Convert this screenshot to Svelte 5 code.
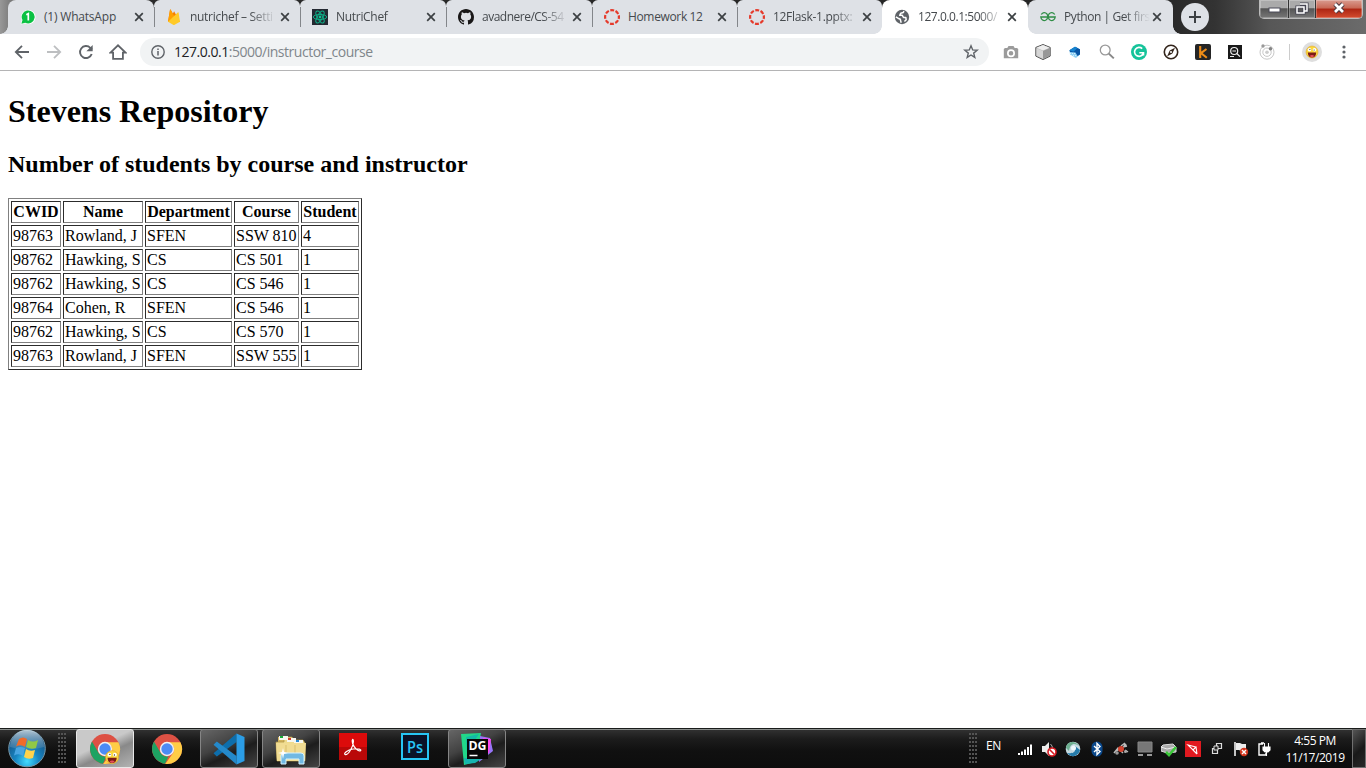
<script>
  const tabs = [
    { icon: 'whatsapp', title: '(1) WhatsApp', spacing: -0.2, width: 146 },
    { icon: 'firebase', title: 'nutrichef – Setti', spacing: -0.3, width: 146 },
    { icon: 'react', title: 'NutriChef', spacing: -0.3, width: 146 },
    { icon: 'github', title: 'avadnere/CS-54', spacing: -0.5, width: 146 },
    { icon: 'canvas', title: 'Homework 12', spacing: -0.35, width: 145 },
    { icon: 'canvas', title: '12Flask-1.pptx:', spacing: -0.3, width: 145 },
    { icon: 'globe', title: '127.0.0.1:5000/', spacing: -0.45, width: 146, active: true },
    { icon: 'gfg', title: 'Python | Get firs', spacing: -0.42, width: 145 }
  ];
  const extensions = ['camera', 'cube', 'blue', 'lens', 'grammarly', 'compass', 'kite', 'inspect', 'orbit'];
  const columns = ['CWID', 'Name', 'Department', 'Course', 'Student'];
  const rows = [
    ['98763', 'Rowland, J', 'SFEN', 'SSW 810', '4'],
    ['98762', 'Hawking, S', 'CS', 'CS 501', '1'],
    ['98762', 'Hawking, S', 'CS', 'CS 546', '1'],
    ['98764', 'Cohen, R', 'SFEN', 'CS 546', '1'],
    ['98762', 'Hawking, S', 'CS', 'CS 570', '1'],
    ['98763', 'Rowland, J', 'SFEN', 'SSW 555', '1']
  ];
  const apps = [
    { icon: 'chromeUser', state: 'current' },
    { icon: 'chrome', state: '' },
    { icon: 'vscode', state: 'open' },
    { icon: 'explorer', state: 'open' },
    { icon: 'acrobat', state: '' },
    { icon: 'photoshop', state: '' },
    { icon: 'datagrip', state: 'open' }
  ];
  const tray = ['signal', 'speaker', 'swirl', 'bluetooth', 'bug', 'monitor', 'drive', 'red', 'windows', 'flag', 'power'];
</script>

{#snippet face()}
  <circle cx="8" cy="8" r="6" fill="#fbd83c" stroke="#e3a42d" stroke-width=".6" />
  <circle cx="5.5" cy="5.7" r="1.8" fill="#fff" /><circle cx="10.5" cy="5.7" r="1.8" fill="#fff" />
  <circle cx="5.9" cy="5.5" r=".6" fill="#432" /><circle cx="10.1" cy="6" r=".6" fill="#432" />
  <path d="M3.8 8.5h8.4c0 3-1.6 5-4.2 5s-4.2-2-4.2-5z" fill="#7c1b15" />
  <path d="M5.7 12c1.3-1.2 3.3-1.2 4.6 0-1.1 1.5-3.5 1.5-4.6 0z" fill="#e8505b" />
{/snippet}

{#snippet chromeLogo()}
  <circle cx="16" cy="16" r="15" fill="#dd5144" />
  <path d="M3 8.5 9.5 19.8A7.5 7.5 0 0 0 17.5 23.3L14 30.8A15 15 0 0 1 3 8.5z" fill="#1da362" />
  <path d="M16 9.2h13.4A15 15 0 0 1 14.2 30.9l8.1-11.2A7.2 7.2 0 0 0 16 9.2z" fill="#ffcd46" />
  <circle cx="16" cy="16" r="7.2" fill="#f1f1f1" /><circle cx="16" cy="16" r="5.7" fill="#4c8bf5" />
{/snippet}

{#snippet favicon(name)}
  <svg width="16" height="16" viewBox="0 0 16 16">
    {#if name === 'whatsapp'}
      <path d="M.6 15.5 1.8 11A7.2 7.2 0 1 1 5 14.4z" fill="#fff" />
      <path d="M1.4 14.7l1.1-3.6A6.5 6.5 0 1 1 5.2 13.7z" fill="#0bc143" />
      <path d="M6.3 5.8 8.3 4.7V11.4" stroke="#fff" stroke-width="1.7" fill="none" />
    {:else if name === 'firebase'}
      <path d="M2 12.7 4 .8c.1-.5.5-.5.7-.1L6.8 4.6l1-1.7c.2-.4.5-.4.7 0L14 13z" fill="#f57c00" />
      <path d="M2 12.7 4 .8c.1-.5.5-.5.7-.1l4 7.4z" fill="#ffa000" />
      <path d="M2 12.7 11.8 3.4c.3-.3.7-.2.8.3L14 12.7 8.6 15.7c-.5.3-1 .3-1.5 0z" fill="#ffca28" />
    {:else if name === 'react'}
      <rect width="16" height="16" fill="#242932" />
      <g fill="none" stroke="#0fae87" stroke-width="1">
        <ellipse cx="8" cy="8" rx="6.7" ry="2.6" /><ellipse cx="8" cy="8" rx="6.7" ry="2.6" transform="rotate(60 8 8)" /><ellipse cx="8" cy="8" rx="6.7" ry="2.6" transform="rotate(120 8 8)" />
      </g><circle cx="8" cy="8" r="1.4" fill="#12c495" />
    {:else if name === 'github'}
      <path fill="#191717" d="M8 0C3.58 0 0 3.58 0 8c0 3.54 2.29 6.53 5.47 7.59.4.07.55-.17.55-.38 0-.19-.01-.82-.01-1.49-2.01.37-2.53-.49-2.69-.94-.09-.23-.48-.94-.82-1.13-.28-.15-.68-.52-.01-.53.63-.01 1.08.58 1.23.82.72 1.21 1.87.87 2.33.66.07-.52.28-.87.51-1.07-1.78-.2-3.64-.89-3.64-3.95 0-.87.31-1.59.82-2.15-.08-.2-.36-1.02.08-2.12 0 0 .67-.21 2.2.82a7.6 7.6 0 0 1 4 0c1.53-1.04 2.2-.82 2.2-.82.44 1.1.16 1.92.08 2.12.51.56.82 1.27.82 2.15 0 3.07-1.87 3.75-3.65 3.95.29.25.54.73.54 1.48 0 1.07-.01 1.93-.01 2.2 0 .21.15.46.55.38A8 8 0 0 0 16 8c0-4.42-3.58-8-8-8z" />
    {:else if name === 'canvas'}
      <circle cx="8" cy="8" r="6.9" fill="none" stroke="#e53a2b" stroke-width="2.2" stroke-dasharray="3.9 1.519" stroke-dashoffset="1.95" />
    {:else if name === 'globe'}
      <circle cx="8" cy="8" r="7.2" fill="#5f6368" />
      <path d="M10 2.2 9.2 3.6 6.8 4.2 5.7 6.3H8.300L9.500 8.500H11.800L12.200 10.700 10.400 12.600" fill="none" stroke="#fff" stroke-width="1.5" stroke-linejoin="round" />
      <path d="M1.800 7.800 4 9.200 6.300 10.200 6.600 11.600 7.200 13.800" fill="none" stroke="#fff" stroke-width="1.500" stroke-linejoin="round" />
    {:else if name === 'gfg'}
      <path d="M1.3 5.5A3.5 4 0 1 1 .8 8H15.2A3.5 4 0 1 1 14.7 5.5" fill="none" stroke="#2f8d46" stroke-width="1.3" />
    {/if}
  </svg>
{/snippet}

{#snippet extIcon(name)}
  <svg width="16" height="16" viewBox="0 0 16 16">
    {#if name === 'camera'}
      <path fill-rule="evenodd" fill="#9b9b9b" d="M5.5 2h5l1.2 2H14l1.2 1v9.3H.8V5L2 4h2.3zM8 5.2a4 4 0 1 0 0 8 4 4 0 0 0 0-8zm0 1.7a2.3 2.3 0 1 1 0 4.6 2.3 2.3 0 0 1 0-4.6z" />
    {:else if name === 'cube'}
      <path d="M8 .5 15.2 3.4v8.7L8 15.6.8 12.1V3.4z" fill="#bbb" stroke="#555" />
      <path d="M8 1 14.5 3.7 8 6.5 1.5 3.7z" fill="#eee" /><path d="M8 7l6.5-2.7v7.4L8 14.8z" fill="#989898" /><path d="M1.5 4.3 8 7v7.8l-6.5-3z" fill="#d5d5d5" />
    {:else if name === 'blue'}
      <path d="M2.5 6.3 8 2.8l5 2.4v5.3l-4 3.5-6-3.5z" fill="#8fd0f4" /><path d="M2.5 6.3 8 2.8l5 2.4v5.3l-2.5 1.5-2-3.5-5.5-.5z" fill="#0955a5" /><path d="M2.5 6.3 8 2.8l2.5 1.3-4 3.6z" fill="#1685d0" />
      <path d="M3 9.5h5M4 11.5h5M7 13.5h2" fill="none" stroke="#e4f5fd" stroke-width=".8" stroke-dasharray="1 1" />
    {:else if name === 'lens'}
      <circle cx="6.2" cy="6" r="4.9" fill="none" stroke="#999" stroke-width="1.3" /><path d="m9.8 9.6 5 4.8" stroke="#888" stroke-width="2" />
    {:else if name === 'grammarly'}
      <circle cx="8" cy="8" r="8" fill="#15c39a" /><path d="M11.2 4.6A4.5 4.5 0 1 0 12.3 9.4M8.3 8.7h4.2v2.8" fill="none" stroke="#fff" stroke-width="1.6" />
    {:else if name === 'compass'}
      <circle cx="8" cy="8" r="6.7" fill="#fff" stroke="#33251b" stroke-width="1.6" /><path d="m12 3.8-2.6 5.6-5.4 3 2.7-5.8z" fill="#33251b" /><circle cx="8" cy="8" r="1" fill="#fff" />
    {:else if name === 'kite'}
      <rect width="16" height="16" rx="2" fill="#252525" /><path d="M5.2 2v12M11.5 5 6 9.1l5.8 4.6" fill="none" stroke="#ef8d17" stroke-width="2.1" />
    {:else if name === 'inspect'}
      <rect x="1" y="1" width="14" height="14" fill="#191919" /><circle cx="7.2" cy="7" r="3.5" fill="none" stroke="#eee" stroke-width="1.2" /><path d="m9.8 9.5 3.2 3.2M5.4 7h3.6M3 12.5h4" stroke="#eee" stroke-width="1.2" />
    {:else if name === 'orbit'}
      <g fill="none" stroke="#c7c7c7"><circle cx="8" cy="8.2" r="7" /><circle cx="8" cy="8.2" r="4.2" /></g><circle cx="8" cy="8.2" r="1.8" fill="#ccc" /><circle cx="4" cy="2" r="1.7" fill="#999" /><circle cx="11.5" cy="4.8" r="1.8" fill="#858585" />
    {/if}
  </svg>
{/snippet}

{#snippet appIcon(name)}
  <svg width="32" height="32" viewBox="0 0 32 32">
    {#if name === 'chrome'}
      {@render chromeLogo()}
    {:else if name === 'chromeUser'}
      {@render chromeLogo()}
      <g transform="translate(14.5 15.5) scale(1.08)">{@render face()}</g>
    {:else if name === 'vscode'}
      <path d="M23.5.5V9L3.8 23.5.5 20.3z" fill="#0d6eac" />
      <path d="M23.5 31.5V23L3.8 8.5.5 11.7z" fill="#2489ca" />
      <path d="M23.5.5 31.5 4v24l-8 3.5z" fill="#2b9de6" />
    {:else if name === 'explorer'}
      <path d="M3 4h9l1 3h9l1 2h6v19H3z" fill="#d5b55e" /><path d="M1 9h8V4h8l2 3h9l2 3v18H2z" fill="#efdb8d" stroke="#ad9346" stroke-width=".7" />
      <path d="M4 3h9v4H4zM12 5h9v4h-9zM19 7h9v4h-9z" fill="#f7f7f0" /><path d="M5 3h3v2H5z" fill="#18ab38" /><path d="M13 5h3v2h-3z" fill="#d53b2c" /><path d="M21 7h3v2h-3z" fill="#2b8cd6" />
      <path d="M1 10h30l-1 18H2z" fill="#f1dc92" /><path d="M11 12v9M20 12v8" stroke="#d9bf6e" />
      <path d="M6 31v-8q0-3 3-3h17q3 0 3 3v8h-5v-5H11v5z" fill="#71b9e3" stroke="#d5f3ff" /><path d="m8 15 1 4 4 1-4 1-1 5-1-5-4-1 4-1z" fill="#fff" />
    {:else if name === 'acrobat'}
      <rect x="2" y="0" width="28" height="27" fill="#b90808" /><rect x="2" y="0" width="28" height="14" fill="#dc0b0b" />
      <path d="M8 21.5c-1.5-1 2-4.5 8-5.5 5-.8 9 .5 7.5 1.7-2 1.3-6.5-3-7.9-7.2-1.3-4.5.9-5.5.8-1.7-.2 5-5.4 14-8.4 12.7z" fill="none" stroke="#fff" stroke-width="1.2" />
    {:else if name === 'photoshop'}
      <rect x="3" y="1" width="26" height="25" fill="#0a1227" stroke="#27c5f5" stroke-width="2" />
      <text x="16" y="19.5" text-anchor="middle" font-family="Open Sans" font-size="16" font-weight="600" textLength="16" lengthAdjust="spacingAndGlyphs" fill="#27c5f5">Ps</text>
    {:else if name === 'datagrip'}
      <path d="M0 1 20 0 15 29 3 32z" fill="#21d789" /><path d="m5 4 13-3-12 18z" fill="#14b8a6" /><path d="M19 3 29 5l3 13-14 11z" fill="#9775f8" /><path d="m22 5 8 1-2 14h-6z" fill="#ff45ed" /><path d="M3 25h19l-8 5-10 1z" fill="#16b5b0" />
      <rect x="6" y="6" width="21" height="20" fill="#080808" /><text x="7.5" y="17" font-family="Open Sans" font-size="12" font-weight="700" textLength="18" lengthAdjust="spacingAndGlyphs" fill="#fff">DG</text><path d="M8.5 22.5h8" stroke="#fff" stroke-width="1.5" />
    {/if}
  </svg>
{/snippet}

{#snippet trayIcon(name)}
  <svg width="16" height="16" viewBox="0 0 16 16">
    {#if name === 'signal'}
      <path d="M1 12h2v2H1zM4 10.5h2V14H4zM7 8.5h2V14H7zM10 6h2v8h-2zM13 3.5h2V14h-2z" fill="#fff" />
    {:else if name === 'speaker'}
      <path d="M1 5h3l4-4v14l-4-4H1z" fill="#eee" /><path d="M9.5 3q2 2 2 4" stroke="#aaa" fill="none" /><circle cx="11" cy="11" r="4" fill="#fff" stroke="#d71920" stroke-width="1.6" /><path d="m8.5 8.5 5 5" stroke="#d71920" stroke-width="1.6" />
    {:else if name === 'swirl'}
      <circle cx="8" cy="8" r="7.3" fill="#c6dae2" /><path d="M1 7C2 0 10-1 14 5 9 1 5 3 4 10z" fill="#6daf90" /><path d="M15 9c-2 7-9 8-13 3 7 1 9-1 8-7z" fill="#257baa" /><circle cx="8.5" cy="7" r="2.5" fill="#eef8fc" />
    {:else if name === 'bluetooth'}
      <rect x="2.5" y=".5" width="11" height="15" rx="5.5" fill="#0a488b" /><path d="m5 5 6 5.5L8 13.5v-11l3 3L5 11" fill="none" stroke="#fff" stroke-width="1.4" />
    {:else if name === 'bug'}
      <path d="m1 12 4-5 5 5M8 5l4-3M12 9l3 2M3 10l5-3M10 6l4-1" fill="none" stroke="#bbb" stroke-width="1.5" /><circle cx="8" cy="8" r="3" fill="#d34430" /><circle cx="12" cy="4" r="1.6" fill="#bbb" /><circle cx="4" cy="12" r="1.8" fill="#999" /><circle cx="12.5" cy="10.5" r="1.5" fill="#aaa" />
    {:else if name === 'monitor'}
      <path d="M1 1h14v10H1z" fill="#777" stroke="#888" /><path d="M1 13h5v2H1zM10 13h5v2h-5z" fill="#999" />
    {:else if name === 'drive'}
      <path d="m2 4 10-1 3 3v5l-9 1-6-2V6z" fill="#aaa" stroke="#ddd" /><path d="m0 6 6 2 9-2" stroke="#eee" fill="none" /><path d="m5 11 3 3 7-8" fill="none" stroke="#3bc639" stroke-width="2.6" />
    {:else if name === 'red'}
      <rect width="16" height="16" fill="#e1191f" /><path d="m3 4 8 2-3 3zM8 9l4 4M11 6l1 7" fill="none" stroke="#fff" stroke-width="1.1" />
    {:else if name === 'windows'}
      <path d="M7.5 2.5h5v5h-5zM3.500 7.500h5v5h-5z" fill="#222" stroke="#ddd" stroke-width="1.2" /><path d="M5 5h4v4H5z" fill="#222" stroke="#ddd" />
    {:else if name === 'flag'}
      <path d="M2 1v14" stroke="#fff" stroke-width="1.5" /><path d="M3 2h4l2 1h4v7H8L6 9H3z" fill="#eee" /><circle cx="11" cy="11" r="4.2" fill="#d4361e" /><path d="m9 9 4 4m0-4-4 4" stroke="#fff" stroke-width="1.4" />
    {:else if name === 'power'}
      <path d="M6 3H2v11h7v-2M4 2h3" fill="none" stroke="#fff" stroke-width="1.4" /><path d="M6 6h7v3l-2 2H8L6 9zM7.500 2v4M11.500 2v4M9.500 11v4" fill="#fff" stroke="#fff" stroke-width="1.1" />
    {/if}
  </svg>
{/snippet}

<div class="screen">
  <header class="titlebar">
    <nav class="tabs">
      {#each tabs as tab, i}
        <div class="tab" class:active={tab.active} class:first={i === 0} class:last={i === 7} class:divided={i > 0 && i < 6} style="width: {tab.width}px">
          {@render favicon(tab.icon)}
          <span class="tab-title" style="letter-spacing: {tab.spacing}px">{tab.title}</span>
          <svg class="tab-close" width="10" height="10" viewBox="0 0 10 10"><path d="m1.2 1.2 7.600 7.600m0-7.600L1.200 8.800" stroke="#3c4043" stroke-width="1.7" /></svg>
        </div>
      {/each}
    </nav>
    <div class="new-tab"><svg width="14" height="14" viewBox="0 0 14 14"><path d="M7 1v12M1 7h12" stroke="#3c4043" stroke-width="2" /></svg></div>
    <div class="window-buttons">
      <div class="minimize"><svg width="13" height="7"><rect x="1" y="1" width="11" height="4" fill="#fff" stroke="#4b4b58" /></svg></div>
      <div class="restore"><svg width="14" height="13" viewBox="0 0 14 13"><path d="M5 2h7v7H9M2 5h7v6H2z" fill="none" stroke="#454553" stroke-width="3.2" /><path d="M5 2h7v7H9M2 5h7v6H2z" fill="none" stroke="#fff" stroke-width="1.5" /></svg></div>
      <div class="close"><svg width="14" height="12" viewBox="0 0 14 12"><path d="m3 2 8 8m0-8-8 8" stroke="#4b3840" stroke-width="4.6" /><path d="m3 2 8 8m0-8-8 8" stroke="#fff" stroke-width="2.7" /></svg></div>
    </div>
  </header>

  <div class="toolbar">
    <div class="navigation">
      <svg width="16" height="16" viewBox="0 0 16 16"><path d="M15 8H2M8 1.8 1.8 8 8 14.2" fill="none" stroke="#5f6368" stroke-width="1.8" /></svg>
      <svg width="16" height="16" viewBox="0 0 16 16"><path d="M1 8h13M8 1.8 14.2 8 8 14.2" fill="none" stroke="#bdbfc1" stroke-width="1.8" /></svg>
      <svg width="16" height="16" viewBox="0 0 16 16"><path d="M13.7 10A6 6 0 1 1 12.3 3.8L14 5.5" fill="none" stroke="#5f6368" stroke-width="1.9" /><path d="M14.7 1v6.3H8.4z" fill="#5f6368" /></svg>
      <svg class="home" width="18" height="16" viewBox="0 0 18 16"><path d="M1.5 8.6 9 1.3l7.5 7.3h-2.6v6.3H4.1V8.6z" fill="none" stroke="#5f6368" stroke-width="1.8" /></svg>
    </div>
    <div class="address">
      <svg width="14" height="14" viewBox="0 0 14 14"><circle cx="7" cy="7" r="6.2" fill="none" stroke="#5f6368" stroke-width="1.4" /><path d="M7 6v4.5M7 3.4v1.5" stroke="#5f6368" stroke-width="1.5" /></svg>
      <div class="url"><span>127.0.0.1</span>:5000/instructor_course</div>
      <svg class="star" width="16" height="16" viewBox="0 0 16 16"><path d="m8 1.8 1.7 4.1 4.5.3-3.5 2.9 1.1 4.3L8 11l-3.8 2.4 1.1-4.3-3.5-2.9 4.5-.3z" fill="none" stroke="#5f6368" stroke-width="1.4" /></svg>
    </div>
    <div class="extensions">
      {#each extensions as ext}{@render extIcon(ext)}{/each}
    </div>
    <div class="rule"></div>
    <div class="avatar"><svg width="16" height="16" viewBox="0 0 16 16">{@render face()}</svg></div>
    <svg class="dots" width="4" height="16" viewBox="0 0 4 16"><circle cx="2" cy="3" r="1.6" /><circle cx="2" cy="8" r="1.6" /><circle cx="2" cy="13" r="1.6" /></svg>
  </div>

  <main>
    <h1>Stevens Repository</h1>
    <h2>Number of students by course and instructor</h2>
    <table>
      <colgroup><col class="c1" /><col class="c2" /><col class="c3" /><col class="c4" /><col class="c5" /></colgroup>
      <thead><tr>{#each columns as column}<th>{column}</th>{/each}</tr></thead>
      <tbody>
        {#each rows as row}<tr>{#each row as cell}<td>{cell}</td>{/each}</tr>{/each}
      </tbody>
    </table>
  </main>

  <footer class="taskbar">
    <svg class="orb" width="40" height="39" viewBox="0 0 40 39">
      <defs>
        <radialGradient id="orbFill" cx=".5" cy=".85" r=".8"><stop offset="0" stop-color="#45dcff" /><stop offset=".4" stop-color="#1786c3" /><stop offset="1" stop-color="#164776" /></radialGradient>
        <linearGradient id="orbGlow" x2="0" y2="1"><stop stop-color="#dceaf1" stop-opacity=".8" /><stop offset="1" stop-color="#789eb8" stop-opacity=".25" /></linearGradient>
      </defs>
      <circle cx="20" cy="19.5" r="18.3" fill="url(#orbFill)" stroke="#7797a7" />
      <path d="M3 18a17 17 0 0 1 34 0Q20 23 3 18z" fill="url(#orbGlow)" />
      <path d="M12 10q4-3 8 0l-2 8q-4-3-9-.5z" fill="#f06b2a" /><path d="M21 11q5 3 10 0l-2 8q-5 2-10-1z" fill="#91c846" /><path d="M9 19q4-2 9 0l-2 8q-4-3-9-.5z" fill="#48a5e2" /><path d="M19 20q4 3 9 1l-2 8q-5 2-9-1z" fill="#ffd34c" />
    </svg>
    <div class="grip"></div>
    <div class="apps">
      {#each apps as app}<div class="app {app.state} {app.icon}">{@render appIcon(app.icon)}</div>{/each}
    </div>
    <div class="grip tray-grip"></div>
    <span class="language">EN</span>
    <div class="tray">{#each tray as item}{@render trayIcon(item)}{/each}</div>
    <div class="clock"><span class="time">4:55 PM</span><span class="date">11/17/2019</span></div>
    <div class="desktop"></div>
  </footer>
</div>

<style>
  :global(body) { margin: 0; overflow: hidden; }
  .screen { width: 1366px; height: 768px; display: flex; flex-direction: column; overflow: hidden; background: #fff; font-family: "Open Sans", "Noto Sans", sans-serif; }
  svg { display: block; flex-shrink: 0; }
  .titlebar { height: 34px; flex: none; display: flex; align-items: flex-start; background: linear-gradient(90deg, #989898 0, #777 12px, #2b2b2b 90px, #242424 1150px, #333 1215px, #575757 1270px, #6b6b6b 1366px); }
  .tabs { width: 1165px; height: 34px; margin-left: 8px; display: flex; }
  .tab { position: relative; flex: none; box-sizing: border-box; padding: 0 10px 0 12px; display: flex; align-items: center; background: #dee1e6; border-radius: 8px 8px 0 0; }
  .tab.active, .tab.last { padding-right: 11px; }
  .tab-title { margin-left: 8px; min-width: 83px; white-space: nowrap; font-size: 12px; line-height: 18px; color: #45494d; -webkit-mask-image: linear-gradient(90deg, #000 60px, transparent 86px); mask-image: linear-gradient(90deg, #000 60px, transparent 86px); }
  .tab:first-child .tab-title, .tab:nth-child(5) .tab-title { -webkit-mask-image: none; mask-image: none; }
  .tab-close { margin-left: auto; }
  .tab.divided::before { content: ""; position: absolute; left: 0; top: 7px; width: 1px; height: 20px; background: #83868a; }
  .tab.divided { border-radius: 6px 6px 0 0; }
  .tab.active { z-index: 1; background: #fff; }
  .tab.first::before, .tab.active::before { content: ""; position: absolute; left: -8px; bottom: 0; width: 8px; height: 8px; background: radial-gradient(circle at 0 0, transparent 7.5px, #dee1e6 8px); }
  .tab.active::before { background: radial-gradient(circle at 0 0, transparent 7.5px, #fff 8px); }
  .tab.active::after, .tab.last::after { content: ""; position: absolute; right: -8px; bottom: 0; width: 8px; height: 8px; background: radial-gradient(circle at 100% 0, transparent 7.5px, #fff 8px); }
  .tab.last::after { background: radial-gradient(circle at 100% 0, transparent 7.5px, #dee1e6 8px); }
  .new-tab { width: 28px; height: 28px; margin: 3px 0 0 8px; border-radius: 50%; background: #dee1e6; display: flex; align-items: center; justify-content: center; }
  .window-buttons { margin-left: auto; margin-right: 3px; box-sizing: border-box; width: 104px; height: 19px; display: flex; border: 1px solid #bcbcbc; border-top: 0; border-radius: 0 0 5px 5px; overflow: hidden; }
  .window-buttons div { display: flex; align-items: center; justify-content: center; box-shadow: inset 0 0 0 1px #ffffff40; }
  .minimize { width: 29px; padding-top: 3px; box-sizing: border-box; background: linear-gradient(#aaa 0 45%, #555 48%, #777); border-right: 1px solid #333; }
  .restore { width: 27px; box-sizing: border-box; background: linear-gradient(#aaa 0 45%, #555 48%, #777); border-right: 1px solid #333; padding-bottom: 2px; }
  .close { flex: 1; padding-bottom: 2px; background: linear-gradient(#d99b8f 0, #c86855 45%, #ad2613 50%, #d44c2f); }

  .toolbar { height: 37px; flex: none; box-sizing: border-box; border-bottom: 1px solid #b4b4b5; display: flex; align-items: center; background: #fff; }
  .navigation { display: flex; gap: 16px; margin-left: 14px; width: 114px; }
  .home { margin-left: -1px; }
  .address { margin-left: 12px; width: 849px; height: 28px; box-sizing: border-box; border-radius: 14px; padding: 0 10px 0 11px; display: flex; align-items: center; background: #f1f3f4; }
  .url { margin-left: 9px; font-size: 14px; line-height: 20px; letter-spacing: -.48px; color: #80868b; white-space: nowrap; }
  .url span { color: #202124; }
  .star { margin-left: auto; }
  .extensions { display: flex; gap: 16px; margin-left: 14px; }
  .rule { width: 1px; height: 16px; margin-left: 14px; background: #ccc; }
  .avatar { width: 20px; height: 20px; margin-left: 12px; border-radius: 50%; background: #dedede; display: flex; align-items: center; justify-content: center; }
  .dots { margin-left: 20px; fill: #5f6368; }

  main { flex: 1; padding: 0 8px; font-family: "Liberation Serif", serif; color: #000; }
  h1 { margin: 22px 0 0; font-size: 32px; line-height: 37px; font-weight: 700; }
  h2 { margin: 20px 0 0; font-size: 24px; line-height: 29px; font-weight: 700; }
  table { margin-top: 19px; width: 354px; table-layout: fixed; border: 1px solid; border-color: #808080 #2c2c2c #2c2c2c #808080; border-collapse: separate; border-spacing: 2px; font-size: 16px; line-height: 18px; }
  th, td { height: 18px; padding: 1px; border: 1px solid; border-color: #2c2c2c #808080 #808080 #2c2c2c; white-space: nowrap; }
  .c1 { width: 50px; } .c2 { width: 80px; } .c3 { width: 87px; } .c4 { width: 65px; } .c5 { width: 58px; }

  .taskbar { height: 40px; flex: none; box-sizing: border-box; border-top: 1px solid #1a1c1b; display: flex; align-items: center; background: linear-gradient(#8a8e8c 0 1px, #303030 1px, #1c1c1c 10px, #101010 22px, #0d0d0d); color: #fff; }
  .orb { margin-left: 7px; }
  .grip { width: 9px; height: 31px; margin-left: 11px; margin-right: -1px; background: radial-gradient(circle at 1px 1px, #555 .7px, transparent 1px); background-size: 3px 4px; }
  .apps { display: flex; align-items: center; height: 39px; margin-left: 10px; }
  .app { width: 58px; height: 39px; box-sizing: border-box; margin-right: 4px; display: flex; align-items: center; justify-content: center; }
  .chromeUser, .open { border: 1px solid #858585; border-radius: 3px; }
  .current { background: linear-gradient(155deg, #c9c9c9 0 40%, #898989 60%, #b3b3b3); border-color: #e8e8e8; }
  .open { background: linear-gradient(155deg, #666 0, #424242 40%, #1d1d1d 60%, #444); }
  .tray-grip { margin-left: auto; }
  .language { width: 16px; margin: -6px 0 0 9px; font-size: 12px; letter-spacing: -.3px; }
  .tray { display: flex; gap: 8px; margin-left: 15px; }
  .clock { width: 64px; margin-left: 10px; display: flex; flex-direction: column; align-items: center; font-size: 12px; line-height: 17px; letter-spacing: -.45px; white-space: nowrap; }
  .desktop { width: 14px; height: 39px; box-sizing: border-box; margin-left: 5px; border: 1px solid #707070; background: linear-gradient(135deg, #555, #191919 55%, #282828); }
</style>
